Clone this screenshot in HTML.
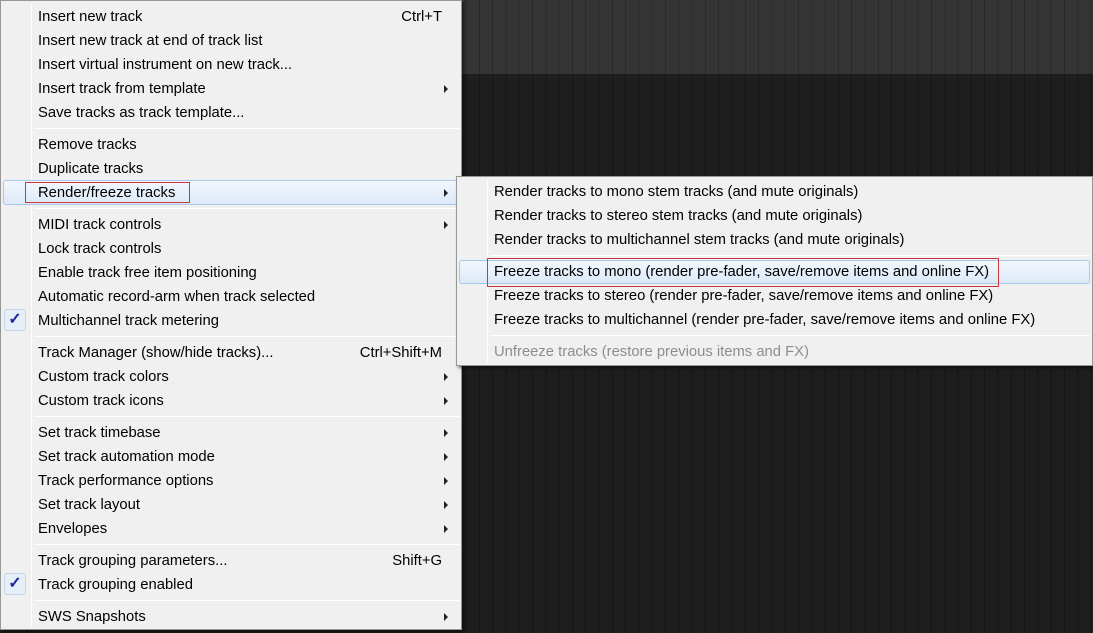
<!DOCTYPE html>
<html><head><meta charset="utf-8"><style>
*{margin:0;padding:0;box-sizing:border-box}
body{width:1093px;height:633px;overflow:hidden;position:relative;background:#1f1f1f;font-family:"Liberation Sans",sans-serif;font-size:14.8px;color:#000}
.bgtop{position:absolute;left:0;top:0;width:1093px;height:74px;background:#353535;
background-image:repeating-linear-gradient(90deg,#2a2a2a 0 1px,transparent 1px 13.3px)}
.bgbot{position:absolute;left:0;top:74px;width:1093px;height:559px;background:#1e1e1e;
background-image:repeating-linear-gradient(90deg,#151515 0 1px,transparent 1px 13.3px)}
.menu{position:absolute;background:#f0f0f0;border:1px solid #979797;box-shadow:2px 2px 3px rgba(0,0,0,.5)}
.menu .gut{position:absolute;left:30px;top:2px;bottom:2px;width:1px;background:#e2e3e3;border-right:1px solid #fff}
.it{position:absolute;height:24px;line-height:24px;white-space:nowrap}
.sc{position:absolute;right:16px;top:0}
.ar{position:absolute;right:10px;top:8px;width:0;height:0;border-left:4px solid #222;border-top:4px solid transparent;border-bottom:4px solid transparent}
.sep{position:absolute;height:1px;background:#d7d7d7;border-bottom:1px solid #fff}
.hl{position:absolute;border:1px solid #a8c8ec;border-radius:3px;background:linear-gradient(#f2f7fd,#dde9f8)}
.red{position:absolute;border:1px solid #c8383c}
.chk{position:absolute;left:3px;width:22px;height:22px;border:1px solid #c6d7ea;border-radius:3px;background:#e6eef8;color:#1a2a9a;text-align:center;line-height:20px;font-size:16px;font-weight:bold}
</style></head><body>
<div class="bgtop"></div><div class="bgbot"></div>

<div class="menu" style="left:0;top:0;width:462px;height:630px">
<div class="gut"></div>
<div class="hl" style="left:2px;top:179px;width:456px;height:25px"></div>
<div class="red" style="left:24px;top:181px;width:165px;height:21px"></div>
<div class="it" style="left:37px;top:4px;width:420px">Insert new track<span class="sc">Ctrl+T</span></div>
<div class="it" style="left:37px;top:28px;width:420px">Insert new track at end of track list</div>
<div class="it" style="left:37px;top:52px;width:420px">Insert virtual instrument on new track...</div>
<div class="it" style="left:37px;top:76px;width:420px">Insert track from template<span class="ar"></span></div>
<div class="it" style="left:37px;top:100px;width:420px">Save tracks as track template...</div>
<div class="sep" style="left:33px;top:127px;width:426px"></div>
<div class="it" style="left:37px;top:132px;width:420px">Remove tracks</div>
<div class="it" style="left:37px;top:156px;width:420px">Duplicate tracks</div>
<div class="it" style="left:37px;top:180px;width:420px">Render/freeze tracks<span class="ar"></span></div>
<div class="sep" style="left:33px;top:207px;width:426px"></div>
<div class="it" style="left:37px;top:212px;width:420px">MIDI track controls<span class="ar"></span></div>
<div class="it" style="left:37px;top:236px;width:420px">Lock track controls</div>
<div class="it" style="left:37px;top:260px;width:420px">Enable track free item positioning</div>
<div class="it" style="left:37px;top:284px;width:420px">Automatic record-arm when track selected</div>
<div class="chk" style="top:308px">✓</div>
<div class="it" style="left:37px;top:308px;width:420px">Multichannel track metering</div>
<div class="sep" style="left:33px;top:335px;width:426px"></div>
<div class="it" style="left:37px;top:340px;width:420px">Track Manager (show/hide tracks)...<span class="sc">Ctrl+Shift+M</span></div>
<div class="it" style="left:37px;top:364px;width:420px">Custom track colors<span class="ar"></span></div>
<div class="it" style="left:37px;top:388px;width:420px">Custom track icons<span class="ar"></span></div>
<div class="sep" style="left:33px;top:415px;width:426px"></div>
<div class="it" style="left:37px;top:420px;width:420px">Set track timebase<span class="ar"></span></div>
<div class="it" style="left:37px;top:444px;width:420px">Set track automation mode<span class="ar"></span></div>
<div class="it" style="left:37px;top:468px;width:420px">Track performance options<span class="ar"></span></div>
<div class="it" style="left:37px;top:492px;width:420px">Set track layout<span class="ar"></span></div>
<div class="it" style="left:37px;top:516px;width:420px">Envelopes<span class="ar"></span></div>
<div class="sep" style="left:33px;top:543px;width:426px"></div>
<div class="it" style="left:37px;top:548px;width:420px">Track grouping parameters...<span class="sc">Shift+G</span></div>
<div class="chk" style="top:572px">✓</div>
<div class="it" style="left:37px;top:572px;width:420px">Track grouping enabled</div>
<div class="sep" style="left:33px;top:599px;width:426px"></div>
<div class="it" style="left:37px;top:604px;width:420px">SWS Snapshots<span class="ar"></span></div>
</div>

<div class="menu" style="left:456px;top:176px;width:637px;height:190px">
<div class="gut"></div>
<div class="hl" style="left:2px;top:83px;width:631px;height:24px"></div>
<div class="red" style="left:30px;top:81px;width:512px;height:29px"></div>
<div class="it" style="left:37px;top:3px">Render tracks to mono stem tracks (and mute originals)</div>
<div class="it" style="left:37px;top:27px">Render tracks to stereo stem tracks (and mute originals)</div>
<div class="it" style="left:37px;top:51px">Render tracks to multichannel stem tracks (and mute originals)</div>
<div class="sep" style="left:33px;top:78px;width:600px"></div>
<div class="it" style="left:37px;top:83px">Freeze tracks to mono (render pre-fader, save/remove items and online FX)</div>
<div class="it" style="left:37px;top:107px">Freeze tracks to stereo (render pre-fader, save/remove items and online FX)</div>
<div class="it" style="left:37px;top:131px">Freeze tracks to multichannel (render pre-fader, save/remove items and online FX)</div>
<div class="sep" style="left:33px;top:158px;width:600px"></div>
<div class="it" style="left:37px;top:163px;color:#8d8d8d">Unfreeze tracks (restore previous items and FX)</div>
</div>
</body></html>
